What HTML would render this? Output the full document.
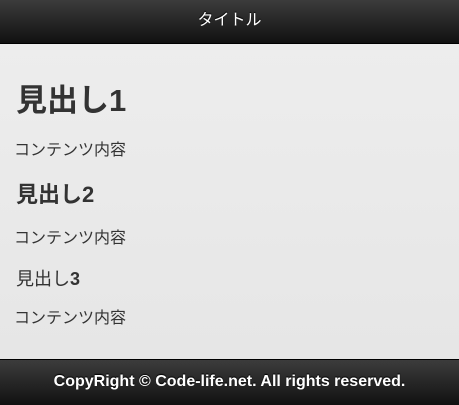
<!DOCTYPE html>
<html><head><meta charset="utf-8"><style>
body{margin:0;width:459px;height:405px;overflow:hidden;font-family:"Liberation Sans","Noto Sans CJK JP",sans-serif;background:linear-gradient(#eeeeee,#e5e5e5);position:relative;color:#333}
.hd{position:absolute;left:0;top:0;width:459px;height:43px;background:linear-gradient(#3c3c3c,#111);border-bottom:1px solid #000;color:#fff;text-align:center;line-height:42px;font-size:16px;text-shadow:0 -1px 1px #000}
.ft{position:absolute;left:0;top:359px;width:459px;height:45px;background:linear-gradient(#3c3c3c,#111);border-top:1px solid #000;color:#fff;text-align:center;line-height:43px;font-size:16px;font-weight:bold;text-shadow:0 -1px 1px #000}
.t{position:absolute;left:15px;white-space:nowrap;line-height:1}
</style></head><body>
<div class="hd">タイトル</div>
<div class="t" style="top:85px;font-size:31px;font-weight:bold;left:16px">見出し1</div>
<div class="t" style="top:143px;font-size:16px;left:14px">コンテンツ内容</div>
<div class="t" style="top:184px;font-size:22px;font-weight:bold;left:16px">見出し2</div>
<div class="t" style="top:231px;font-size:16px;left:14px">コンテンツ内容</div>
<div class="t" style="top:270px;font-size:18px;left:16px">見出し<b>3</b></div>
<div class="t" style="top:311px;font-size:16px;left:14px">コンテンツ内容</div>
<div class="ft">CopyRight © Code-life.net. All rights reserved.</div>
</body></html>
